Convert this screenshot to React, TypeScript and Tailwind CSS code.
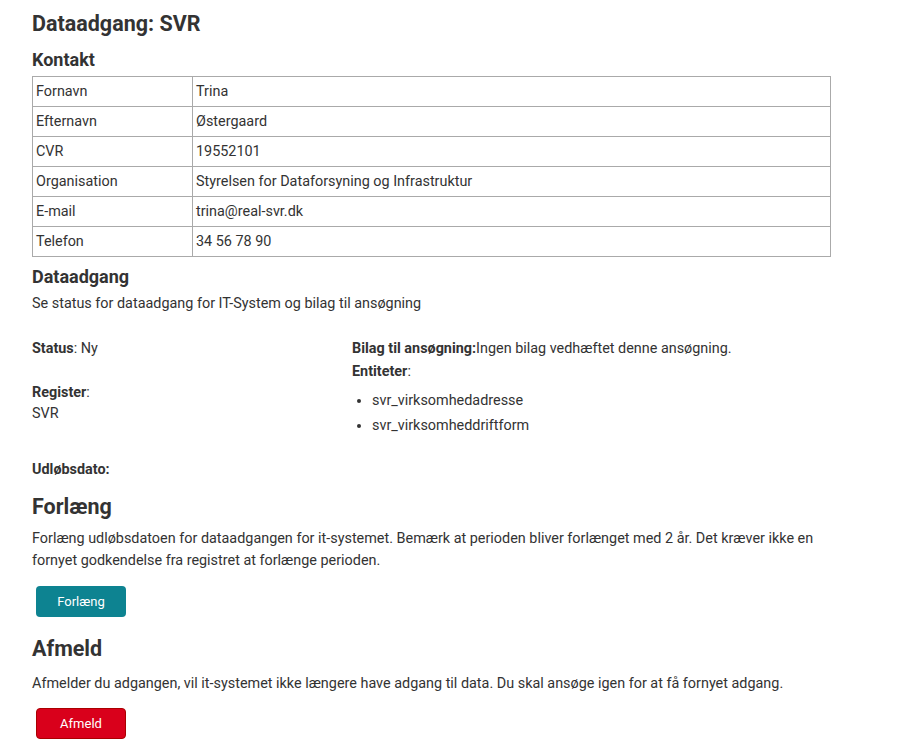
const rows: [string, string][] = [
  ["Fornavn", "Trina"],
  ["Efternavn", "Østergaard"],
  ["CVR", "19552101"],
  ["Organisation", "Styrelsen for Dataforsyning og Infrastruktur"],
  ["E-mail", "trina@real-svr.dk"],
  ["Telefon", "34 56 78 90"],
]

const entities = ["svr_virksomhedadresse", "svr_virksomheddriftform"]

export default function App() {
  return (
    <div className="min-h-screen bg-white text-[#333] font-['Roboto',sans-serif] text-[14.4px] pl-[32px] pr-[69px] pt-[10px]">
      <h1 className="text-[21.5px] font-bold leading-[28px] mb-[10px]">Dataadgang: SVR</h1>

      <h2 className="text-[18px] font-bold leading-[24px] mb-[4px]">Kontakt</h2>
      <table className="w-full border-collapse border border-[#aaa]">
        <tbody>
          {rows.map(([k, v]) => (
            <tr key={k} className="h-[30px]">
              <td className="border border-[#aaa] px-[3px] py-0 w-[160px]">{k}</td>
              <td className="border border-[#aaa] px-[3px] py-0">{v}</td>
            </tr>
          ))}
        </tbody>
      </table>

      <h2 className="text-[18px] font-bold leading-[24px] mt-[8px] mb-[4px]">Dataadgang</h2>
      <p className="leading-[22px]">Se status for dataadgang for IT-System og bilag til ansøgning</p>

      <div className="grid grid-cols-[320px_1fr] mt-[23px]">
        <div>
          <p className="leading-[22px]">
            <span className="font-bold">Status</span>: Ny
          </p>
          <p className="leading-[21px] mt-[22px]">
            <span className="font-bold">Register</span>:
          </p>
          <p className="leading-[21px]">SVR</p>
        </div>
        <div>
          <p className="leading-[22px]">
            <span className="font-bold">Bilag til ansøgning:</span>Ingen bilag vedhæftet denne ansøgning.
          </p>
          <p className="leading-[22px] mt-[1px]">
            <span className="font-bold">Entiteter</span>:
          </p>
          <ul className="list-disc pl-[20px] mt-[5px]">
            {entities.map((e) => (
              <li key={e} className="leading-[25px]">
                {e}
              </li>
            ))}
          </ul>
        </div>
      </div>

      <p className="leading-[22px] mt-[21px] font-bold">Udløbsdato:</p>

      <h2 className="text-[21.5px] font-bold leading-[28px] mt-[12px]">Forlæng</h2>
      <p className="leading-[22px] mt-[7px]">
        Forlæng udløbsdatoen for dataadgangen for it-systemet. Bemærk at perioden bliver forlænget med 2 år. Det kræver ikke en fornyet godkendelse fra registret at forlænge perioden.
      </p>
      <button className="mt-[14px] ml-[4px] w-[90px] h-[31px] rounded-[4px] bg-[#0d8391] text-white text-[13px]">
        Forlæng
      </button>

      <h2 className="text-[21.5px] font-bold leading-[28px] mt-[18px]">Afmeld</h2>
      <p className="leading-[22px] mt-[10px]">
        Afmelder du adgangen, vil it-systemet ikke længere have adgang til data. Du skal ansøge igen for at få fornyet adgang.
      </p>
      <button className="mt-[13px] ml-[4px] w-[90px] h-[31px] rounded-[4px] bg-[#d9001b] border border-[#a00] text-white text-[13px]">
        Afmeld
      </button>
    </div>
  )
}
